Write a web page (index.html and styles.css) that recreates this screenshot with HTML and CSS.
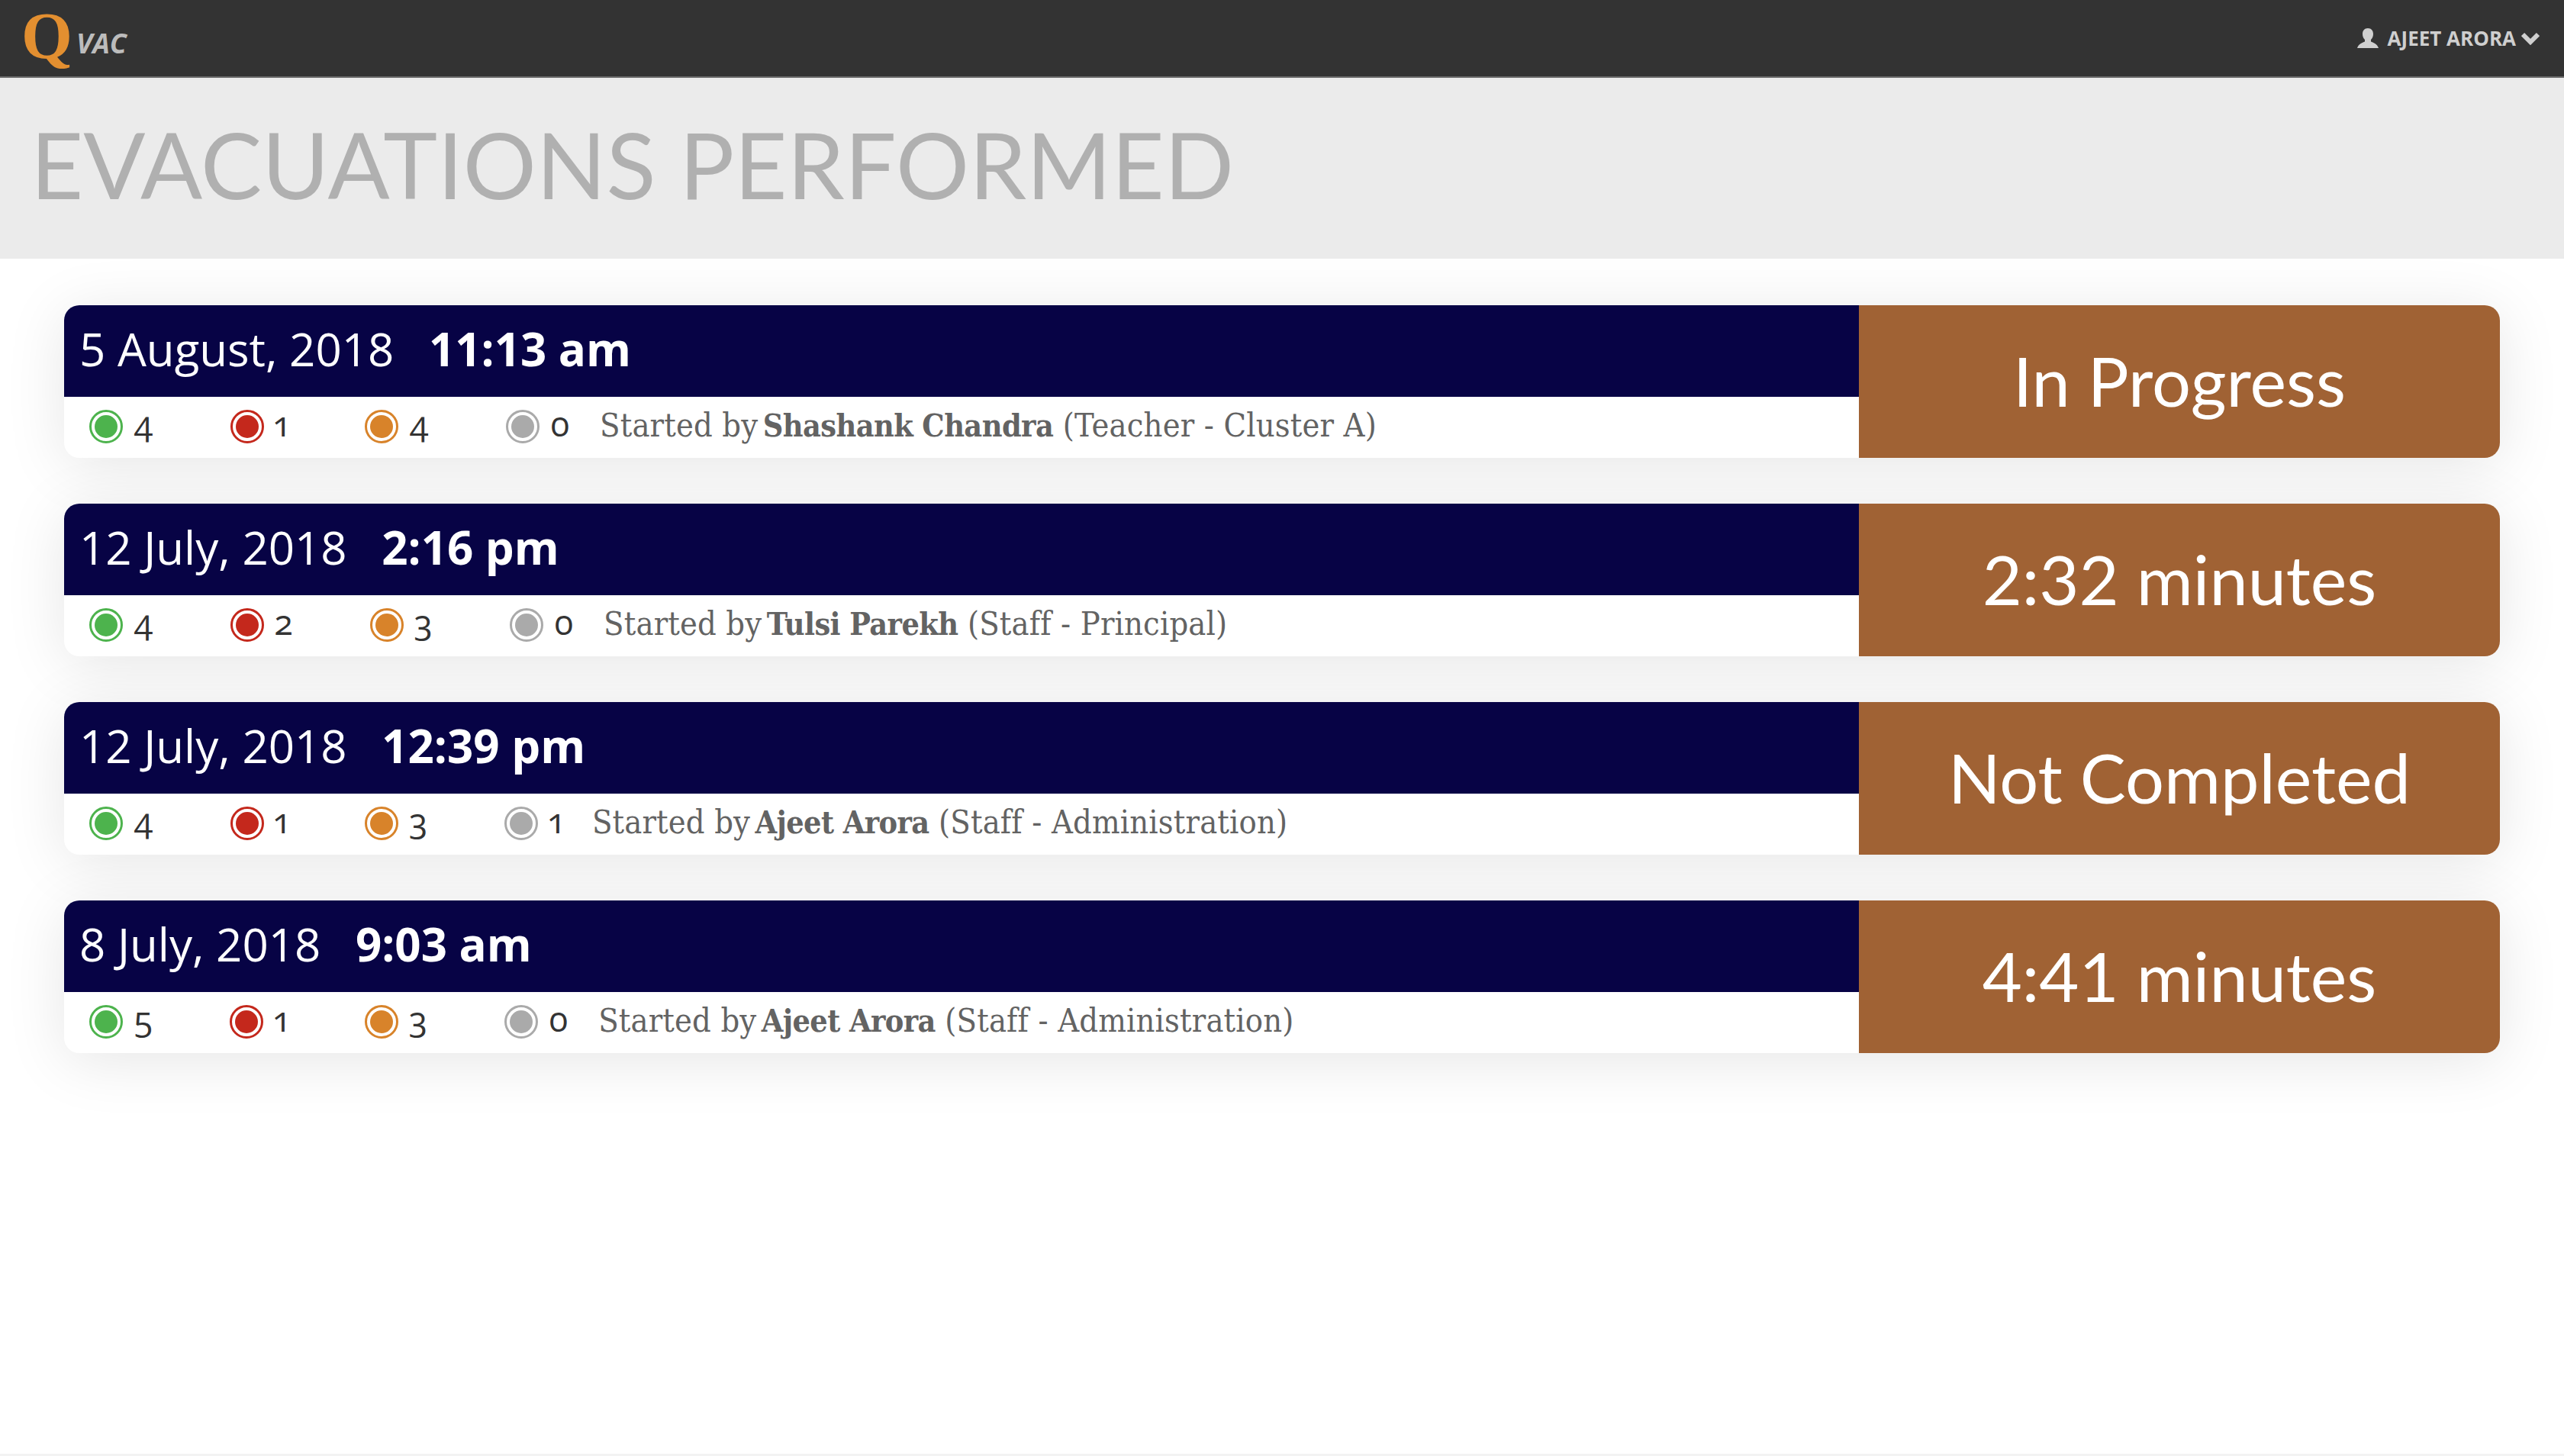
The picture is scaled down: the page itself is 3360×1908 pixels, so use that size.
FILE: index.html
```html
<!DOCTYPE html>
<html lang="en">
<head>
    <title>QVAC - Evacuations Performed</title>
    <link rel="stylesheet" href="styles.css">
</head>
<body>
    <header class="topbar">
        <div class="brand"><span class="brand-q">Q</span><span class="brand-name">VAC</span></div>
        <div class="user">
            <svg class="user-icon" viewBox="0 0 28 26"><path d="M14 0c4.600 0 7 3.400 7 7.500 0 3-1.100 5.800-3 7.500v2.500c2.500 1.500 8 2.500 10 8.500H0c2-6 7.500-7 10-8.500V15c-1.900-1.700-3-4.500-3-7.500C7 3.400 9.400 0 14 0z"/></svg>
            <span>AJEET ARORA</span>
            <svg class="user-caret" viewBox="0 0 24 18"><path d="M2 4l10 10L22 4" /></svg>
        </div>
    </header>

    <div class="title-band">
        <h1>EVACUATIONS PERFORMED</h1>
    </div>

    <main class="list">
        <!-- one card for each evacuation -->
        <section class="card">
            <div class="card-main">
                <div class="card-head">5 August, 2018 <b>11:13 am</b></div>
                <div class="card-row">
                    <span class="count"><i class="dot green"></i><span class="num">4</span></span>
                    <span class="count"><i class="dot red"></i><span class="num">1</span></span>
                    <span class="count"><i class="dot orange"></i><span class="num">4</span></span>
                    <span class="count last"><i class="dot grey"></i><span class="num">0</span></span>
                    <span class="started">Started by <b>Shashank Chandra</b> (Teacher - Cluster A)</span>
                </div>
            </div>
            <div class="card-status">In Progress</div>
        </section>

        <section class="card">
            <div class="card-main">
                <div class="card-head">12 July, 2018 <b>2:16 pm</b></div>
                <div class="card-row">
                    <span class="count"><i class="dot green"></i><span class="num">4</span></span>
                    <span class="count"><i class="dot red"></i><span class="num">2</span></span>
                    <span class="count"><i class="dot orange"></i><span class="num">3</span></span>
                    <span class="count last"><i class="dot grey"></i><span class="num">0</span></span>
                    <span class="started">Started by <b>Tulsi Parekh</b> (Staff - Principal)</span>
                </div>
            </div>
            <div class="card-status">2:32 minutes</div>
        </section>

        <section class="card">
            <div class="card-main">
                <div class="card-head">12 July, 2018 <b>12:39 pm</b></div>
                <div class="card-row">
                    <span class="count"><i class="dot green"></i><span class="num">4</span></span>
                    <span class="count"><i class="dot red"></i><span class="num">1</span></span>
                    <span class="count"><i class="dot orange"></i><span class="num">3</span></span>
                    <span class="count last"><i class="dot grey"></i><span class="num">1</span></span>
                    <span class="started">Started by <b>Ajeet Arora</b> (Staff - Administration)</span>
                </div>
            </div>
            <div class="card-status">Not Completed</div>
        </section>

        <section class="card">
            <div class="card-main">
                <div class="card-head">8 July, 2018 <b>9:03 am</b></div>
                <div class="card-row">
                    <span class="count"><i class="dot green"></i><span class="num">5</span></span>
                    <span class="count"><i class="dot red"></i><span class="num">1</span></span>
                    <span class="count"><i class="dot orange"></i><span class="num">3</span></span>
                    <span class="count last"><i class="dot grey"></i><span class="num">0</span></span>
                    <span class="started">Started by <b>Ajeet Arora</b> (Staff - Administration)</span>
                </div>
            </div>
            <div class="card-status">4:41 minutes</div>
        </section>
    </main>

    <footer class="foot"></footer>
</body>
</html>
```

FILE: styles.css
```css
* {
    box-sizing: border-box;
}

body {
    margin: 0;
    height: 1908px;
    display: flex;
    flex-direction: column;
    background-color: white;
    font-family: "Open Sans", sans-serif;
    overflow: hidden;
}

.topbar {
    height: 102px;
    padding: 0 32px 0 28px;
    display: flex;
    align-items: center;
    justify-content: space-between;
    background-color: #333333;
    border-bottom: 2px solid #6b6b6b;
}

.brand {
    display: flex;
    align-items: center;
}

.brand-q {
    margin-bottom: 6px;
    font-family: "Liberation Serif", serif;
    font-size: 86px;
    font-weight: 700;
    line-height: 100px;
    color: #e38f30;
}

.brand-name {
    margin: 12px 0 0 5px;
    font-size: 36px;
    font-weight: 700;
    font-style: italic;
    color: #bcbcbc;
}

.user {
    display: flex;
    align-items: center;
    font-size: 26px;
    font-weight: 700;
    color: #cfcfcf;
}

.user-icon {
    width: 28px;
    height: 26px;
    margin-right: 12px;
    fill: #cfcfcf;
}

.user-caret {
    width: 24px;
    height: 18px;
    margin-left: 7px;
    fill: none;
    stroke: #cfcfcf;
    stroke-width: 6;
}

.title-band {
    height: 237px;
    padding: 0 0 12px 40px;
    display: flex;
    align-items: center;
    background-color: #ebebeb;
}

.title-band h1 {
    margin: 0;
    font-family: Lato, sans-serif;
    font-size: 120px;
    font-weight: 400;
    color: #b0b0b0;
}

.list {
    flex: 1;
    padding: 61px 84px 0;
    display: flex;
    flex-direction: column;
    gap: 60px;
}

.card {
    height: 200px;
    display: flex;
    border-radius: 20px;
    background-color: white;
    box-shadow: 0 10px 80px rgba(0, 0, 0, 0.1);
    overflow: hidden;
}

.card-main {
    flex: 1;
}

.card-head {
    height: 120px;
    padding: 0 0 6px 20px;
    display: flex;
    align-items: center;
    font-size: 60px;
    white-space: pre;
    color: white;
    background-color: #070345;
}

.card-head b {
    margin-left: 30px;
}

.card-row {
    height: 80px;
    padding: 0 0 2px 33px;
    display: flex;
    align-items: center;
    font-family: "DejaVu Serif", serif;
    font-stretch: condensed;
    font-size: 43px;
    color: #333333;
}

.count {
    display: flex;
    align-items: center;
    margin-right: 101px;
    font-family: "Open Sans", sans-serif;
    font-size: 45px;
    font-stretch: normal;
    font-variant-numeric: oldstyle-nums proportional-nums;
}

.count.last {
    margin-right: 39px;
}

.num {
    margin-bottom: 10px;
}

.dot {
    width: 44px;
    height: 44px;
    margin-right: 14px;
    border: 3px solid;
    border-radius: 50%;
    background-clip: content-box;
    padding: 4px;
}

.dot.green {
    color: #4db34d;
    background-color: #4db34d;
}

.dot.red {
    color: #c4281c;
    background-color: #c4281c;
}

.dot.orange {
    color: #d8832a;
    background-color: #d8832a;
}

.dot.grey {
    color: #aaaaaa;
    background-color: #aaaaaa;
}

.started {
    margin-bottom: 4px;
    letter-spacing: 0.15px;
    color: #636363;
}

.started b {
    margin-left: -6px;
    font-size: 41px;
    letter-spacing: -0.6px;
}

.card-status {
    width: 840px;
    padding-bottom: 4px;
    display: flex;
    align-items: center;
    justify-content: center;
    font-family: Lato, sans-serif;
    font-size: 90px;
    color: white;
    background-color: #a06234;
}

.foot {
    height: 3px;
    background-color: #f3f3f3;
}
```
